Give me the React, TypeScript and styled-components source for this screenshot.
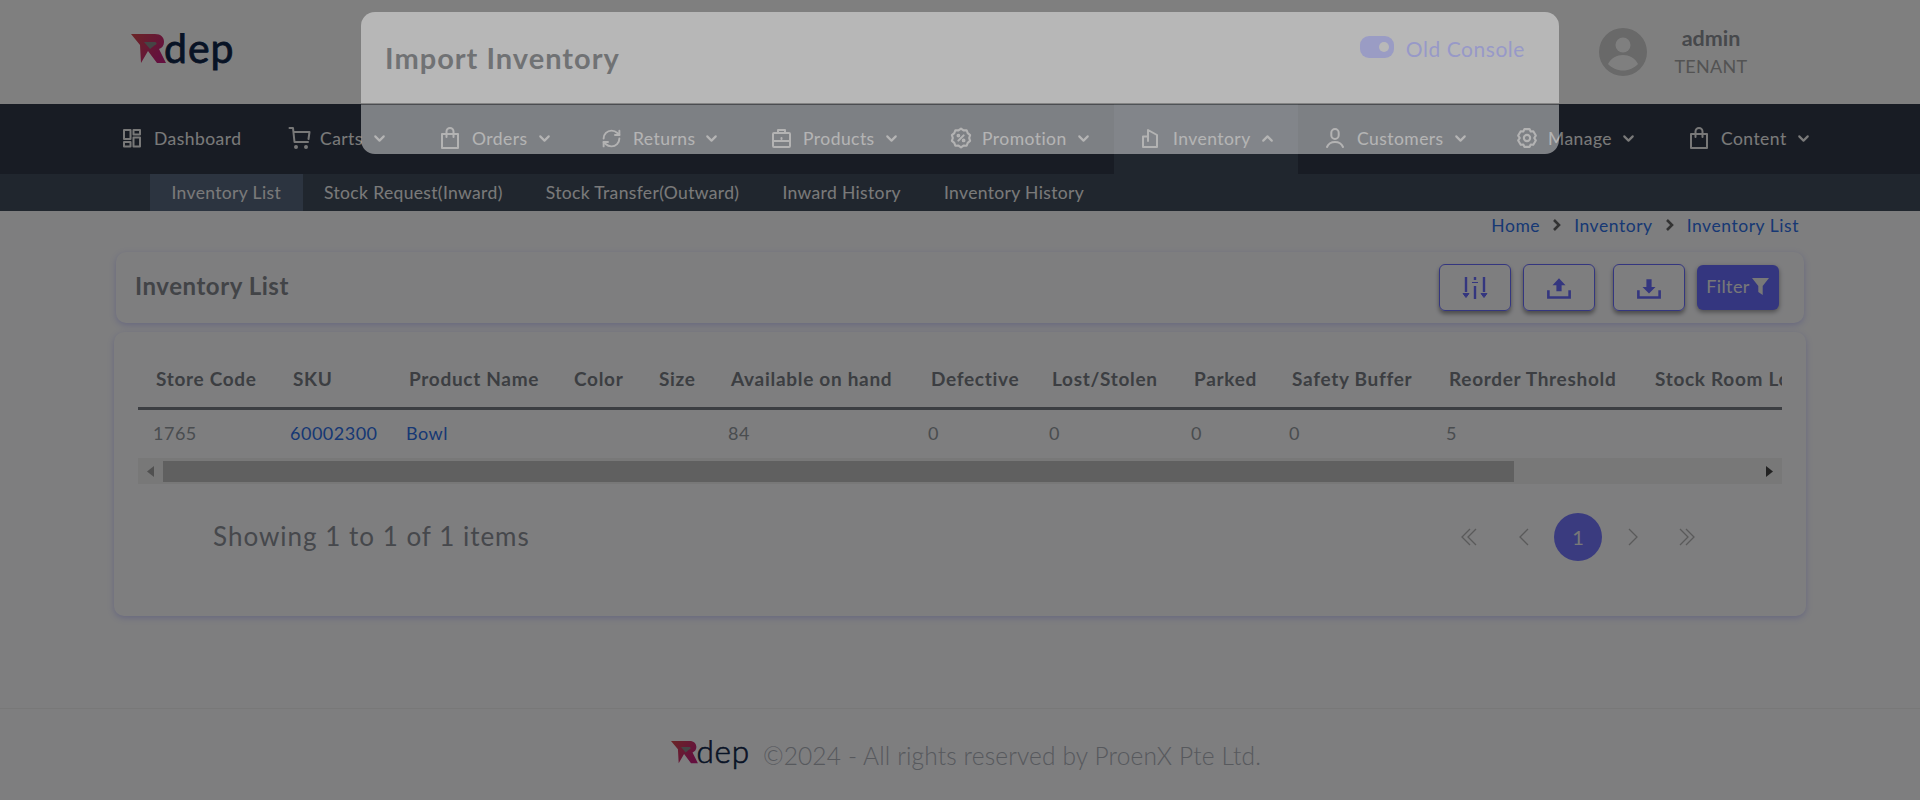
import React from "react";
import styled, { createGlobalStyle } from "styled-components";
import { ChevronDown, ChevronUp, RefreshCw } from "lucide-react";

const FONT = `Lato, "Open Sans", "Liberation Sans", sans-serif`;
const PRIMARY = "#696cff";

const Global = createGlobalStyle`
  html, body { margin: 0; padding: 0; background: #fcfcff; }
  body { font-family: ${FONT}; overflow: hidden; }
  * { box-sizing: border-box; }
`;

const Page = styled.div`
  position: relative;
  width: 1920px;
  height: 800px;
  display: flex;
  flex-direction: column;
  overflow: hidden;
  background: #fcfcff;
`;
const Header = styled.header`
  height: 104px;
  flex: none;
  display: flex;
  align-items: center;
  padding: 0 0 0 131px;
  background: #ffffff;
`;
const LogoWrap = styled.div`
  display: flex;
  margin-top: 1px;
`;
const HeaderRight = styled.div`
  margin-left: auto;
  display: flex;
  align-items: center;
  padding-right: 159px;
`;
const OldConsole = styled.div`
  position: relative;
  z-index: 30;
  display: flex;
  align-items: center;
  gap: 12px;
  margin-right: 74px;
  margin-top: -8px;
  font-size: 21px;
  letter-spacing: 0.55px;
  color: #9799c8;
`;
const ToggleTrack = styled.span`
  position: relative;
  display: block;
  width: 34px;
  height: 22px;
  margin-top: -3px;
  border-radius: 9px;
  background: #9a9cc4;
  &::after {
    content: "";
    position: absolute;
    right: 5px;
    top: 6px;
    width: 10px;
    height: 10px;
    border-radius: 50%;
    background: #b8b8b8;
  }
`;
const Avatar = styled.svg`
  width: 48px;
  height: 48px;
  margin-right: 14px;
  display: block;
`;
const UserBox = styled.div`
  width: 100px;
  display: flex;
  flex-direction: column;
  align-items: center;
  gap: 4px;
`;
const UserName = styled.div`
  font-size: 21.5px;
  font-weight: 700;
  color: #8e9298;
  line-height: 24px;
`;
const UserRole = styled.div`
  font-size: 18px;
  color: #a6a6a6;
  line-height: 24px;
  letter-spacing: 0.3px;
`;
const Nav = styled.nav`
  height: 70px;
  flex: none;
  display: flex;
  padding-left: 95px;
  background: #303848;
`;
const NavItem = styled.div<{ $w: number; $active?: boolean }>`
  width: ${(p) => p.$w}px;
  flex: none;
  display: flex;
  align-items: center;
  padding: 0 0 2px 27px;
  color: #f4f4f4;
  font-size: 17.5px;
  letter-spacing: 0.45px;
  background: ${(p) => (p.$active ? "#404c5c" : "transparent")};
  svg { flex: none; }
`;
const NavIcon = styled.span`
  width: 32px;
  flex: none;
  display: flex;
  align-items: center;
  color: #f0f0f0;
`;
const NavLabel = styled.span`
  margin-right: 8px;
`;
const SubNav = styled.div`
  height: 37px;
  flex: none;
  display: flex;
  padding-left: 150px;
  background: #404c5c;
`;
const SubItem = styled.div<{ $active?: boolean }>`
  padding: 0 21.5px;
  display: flex;
  align-items: center;
  color: #f4f4f4;
  font-size: 17.5px;
  letter-spacing: 0.35px;
  white-space: nowrap;
  background: ${(p) => (p.$active ? "#586880" : "transparent")};
`;
const Crumbs = styled.div`
  height: 28px;
  flex: none;
  display: flex;
  align-items: center;
  justify-content: flex-end;
  gap: 12px;
  padding-right: 121px;
  font-size: 17.5px;
  letter-spacing: 0.55px;
  color: #2e70e8;
  svg { color: #666; }
`;
const Content = styled.main`
  padding: 13px 114px 0 114px;
  display: flex;
  flex-direction: column;
  gap: 9px;
`;
const TitleCard = styled.section`
  margin: 0 2px;
  height: 71px;
  display: flex;
  align-items: center;
  padding: 0 25px 0 19px;
  background: #fcfcff;
  border-radius: 10px;
  box-shadow: 0 2px 6px rgba(105, 108, 255, 0.3);
`;
const PageTitle = styled.h1`
  margin: -4px 0 0;
  font-size: 24px;
  font-weight: 700;
  letter-spacing: 0.55px;
  color: #85888f;
`;
const Actions = styled.div`
  margin-left: auto;
  display: flex;
  align-items: center;
`;
const IconButton = styled.button<{ $gap?: number }>`
  width: 72px;
  height: 47px;
  margin-right: ${(p) => p.$gap ?? 12}px;
  padding: 0;
  display: flex;
  align-items: center;
  justify-content: center;
  background: transparent;
  color: ${PRIMARY};
  border: 1.5px solid ${PRIMARY};
  border-radius: 6px;
  box-shadow: 0 3px 4px rgba(0, 0, 0, 0.4);
`;
const FilterButton = styled.button`
  width: 82px;
  height: 45px;
  padding: 0 0 3px;
  display: flex;
  align-items: center;
  justify-content: center;
  gap: 1px;
  background: ${PRIMARY};
  color: #f0f0f0;
  border: none;
  border-radius: 6px;
  font-family: ${FONT};
  font-size: 18px;
  letter-spacing: 0.4px;
  box-shadow: 0 2px 5px rgba(0, 0, 0, 0.4);
`;
const TableCard = styled.section`
  height: 284px;
  padding: 0 24px;
  background: #fcfcff;
  border-radius: 10px;
  box-shadow: 0 2px 6px rgba(105, 108, 255, 0.3);
`;
const TableClip = styled.div`
  width: 1644px;
  overflow: hidden;
`;
const Table = styled.table`
  width: 1700px;
  table-layout: fixed;
  border-collapse: collapse;
`;
const Th = styled.th`
  height: 76px;
  padding: 18px 0 0 18px;
  text-align: left;
  font-size: 19px;
  font-weight: 700;
  letter-spacing: 0.7px;
  color: #787c84;
  white-space: nowrap;
  border-bottom: 3px solid #787c84;
`;
const Td = styled.td`
  height: 50px;
  padding: 0 0 2px 15px;
  font-size: 18px;
  letter-spacing: 0.5px;
  color: #949aa0;
  white-space: nowrap;
`;
const TdLink = styled(Td)`
  color: #2e70e8;
`;
const ScrollBar = styled.div`
  height: 26px;
  width: 1644px;
  display: flex;
  align-items: center;
  background: #f1f1f1;
`;
const ScrollBtn = styled.span<{ $tone: string }>`
  width: 25px;
  flex: none;
  display: flex;
  justify-content: center;
  svg { display: block; fill: ${(p) => p.$tone}; }
`;
const ScrollThumb = styled.div`
  width: 1351px;
  height: 21px;
  background: #c1c1c1;
`;
const Grow = styled.div`
  flex: 1;
`;
const Pager = styled.div`
  display: flex;
  align-items: center;
  height: 48px;
  margin-top: 29px;
  padding-left: 75px;
`;
const ShowText = styled.div`
  margin-top: -2px;
  font-size: 26px;
  letter-spacing: 1px;
  color: #8c9098;
`;
const PagerRight = styled.div`
  margin-left: auto;
  margin-right: 71px;
  display: flex;
  gap: 6.5px;
`;
const PageBtn = styled.span<{ $active?: boolean }>`
  width: 48px;
  height: 48px;
  border-radius: 50%;
  display: flex;
  align-items: center;
  justify-content: center;
  font-size: 20px;
  color: ${(p) => (p.$active ? "#f0f0f0" : "#b4b4b4")};
  background: ${(p) => (p.$active ? "#7477ff" : "transparent")};
`;
const Footer = styled.footer`
  margin-top: auto;
  height: 92px;
  flex: none;
  display: flex;
  align-items: center;
  justify-content: center;
  gap: 12px;
  padding: 2px 0 0 12px;
  border-top: 1px solid #f0f0f0;
  font-size: 24.5px;
  letter-spacing: 0.15px;
  font-weight: 300;
  color: #aeb2ba;
`;
const Overlay = styled.div`
  position: absolute;
  inset: 0;
  z-index: 10;
  background: rgba(0, 0, 0, 0.5);
`;
const Modal = styled.div`
  position: absolute;
  z-index: 20;
  left: 361px;
  top: 12px;
  width: 1198px;
  height: 142px;
  background: #ffffff;
  border-radius: 14px;
  opacity: 0.44;
`;
const ModalHeader = styled.div`
  height: 93px;
  display: flex;
  align-items: center;
  padding: 0 24px;
  border-bottom: 2px solid #8c8c8c;
`;
const ModalTitle = styled.h2`
  margin: 0;
  font-size: 29px;
  font-weight: 700;
  letter-spacing: 1px;
  color: #5f6368;
`;

const Logo = ({ w, h }: { w: number; h: number }) => (
  <svg width={w} height={h} viewBox="0 0 104 40">
    <defs>
      <linearGradient id="lg" x1="0" y1="0" x2="1" y2="0.6">
        <stop offset="0" stopColor="#d64a4a" />
        <stop offset="1" stopColor="#c8207e" />
      </linearGradient>
    </defs>
    <path d="M0 1h24c6 0 9 3.500 9 8 0 3.500-2 6-5 7l7 14h-9l-9-12-7 12-1-18z" fill="url(#lg)" />
    <path d="M13 9h11c2 0 2 3 0 3l-5 4z" fill="#8a8a8a" />
    <text x="33" y="30" fontFamily="Lato, sans-serif" fontSize="41" letterSpacing="1" stroke="#10264a" strokeWidth="0.8" fill="#10264a">dep</text>
  </svg>
);

const s = { fill: "none", stroke: "currentColor", strokeWidth: 2, strokeLinecap: "round" as const, strokeLinejoin: "round" as const };
const DashIcon = () => (
  <svg width="20" height="20" viewBox="0 0 20 20" {...s}>
    <rect x="2" y="2" width="6.5" height="9" />
    <rect x="11.5" y="2" width="6.5" height="4.5" />
    <rect x="2" y="14" width="6.5" height="4.5" />
    <rect x="11.5" y="9.5" width="6.5" height="9" />
  </svg>
);
const CartIcon = () => (
  <svg width="23" height="24" viewBox="0 0 23 24" {...s}>
    <path d="M1.500 2H5l1.500 14H20" />
    <path d="M6 6h15.500l-1 7" />
    <circle cx="8" cy="21" r="1" fill="currentColor" />
    <circle cx="18" cy="21" r="1" fill="currentColor" />
  </svg>
);
const BagIcon = () => (
  <svg width="20" height="24" viewBox="0 0 20 24" {...s}>
    <rect x="2" y="8" width="16" height="14" />
    <path d="M6.500 8V5.500a3.500 3.500 0 0 1 7 0V8M6.500 8v3M13.500 8v3" />
  </svg>
);
const BoxIcon = () => (
  <svg width="21" height="21" viewBox="0 0 21 21" {...s}>
    <rect x="2" y="5" width="17" height="14" rx="1" />
    <path d="M7 5V2h7v3M2 13h17M10.500 10v1" />
  </svg>
);
const PromoIcon = () => (
  <svg width="22" height="22" viewBox="0 0 21 21" {...s}>
    <path d="M10.500 1.500l2.400 1.700 3-.1 1 2.800 2.300 1.900-.9 2.700.9 2.700-2.300 1.900-1 2.800-3-.1-2.400 1.700-2.400-1.700-3 .1-1-2.800-2.300-1.900.9-2.700-.9-2.700 2.300-1.900 1-2.800 3 .1z" />
    <path d="M13 8l-5 5" />
    <circle cx="8" cy="8.200" r=".8" />
    <circle cx="13" cy="12.800" r=".8" />
  </svg>
);
const InvIcon = () => (
  <svg width="18" height="21" viewBox="0 0 18 21" {...s}>
    <path d="M2 19V8.500h5V2l9 5v12z" />
    <path d="M7 8.500V13" />
  </svg>
);
const UserIcon = () => (
  <svg width="20" height="22" viewBox="0 0 20 22" {...s}>
    <rect x="6.300" y="2" width="7.400" height="10" rx="3.700" />
    <path d="M2 20c1.500-3.600 4.500-5 8-5s6.500 1.400 8 5" />
  </svg>
);
const GearIcon = () => (
  <svg width="22" height="22" viewBox="0 0 21 21" {...s}>
    <path d="M8 2h5l1 2.300 2.500-.3 2.400 4.200-1.500 2.300 1.500 2.300-2.400 4.200-2.500-.3-1 2.300H8l-1-2.300-2.500.3-2.400-4.200 1.500-2.300-1.500-2.300L4.500 4 7 4.300z" />
    <circle cx="10.500" cy="10.500" r="3" />
  </svg>
);
const Chevron = ({ up }: { up?: boolean }) =>
  up ? <ChevronUp size={17} strokeWidth={3} /> : <ChevronDown size={17} strokeWidth={3} />;

const navItems: { label: string; w: number; icon: React.ReactNode; chev?: boolean; active?: boolean }[] = [
  { label: "Dashboard", w: 166, icon: <DashIcon /> },
  { label: "Carts", w: 152, icon: <CartIcon />, chev: true },
  { label: "Orders", w: 161, icon: <BagIcon />, chev: true },
  { label: "Returns", w: 170, icon: <RefreshCw size={21} strokeWidth={2.2} />, chev: true },
  { label: "Products", w: 179, icon: <BoxIcon />, chev: true },
  { label: "Promotion", w: 191, icon: <PromoIcon />, chev: true },
  { label: "Inventory", w: 184, icon: <InvIcon />, chev: true, active: true },
  { label: "Customers", w: 191, icon: <UserIcon />, chev: true },
  { label: "Manage", w: 173, icon: <GearIcon />, chev: true },
  { label: "Content", w: 172, icon: <BagIcon />, chev: true },
];

const columns: [string, number][] = [
  ["Store Code", 137], ["SKU", 116], ["Product Name", 165], ["Color", 85], ["Size", 72],
  ["Available on hand", 200], ["Defective", 121], ["Lost/Stolen", 142], ["Parked", 98],
  ["Safety Buffer", 157], ["Reorder Threshold", 206], ["Stock Room Location", 201],
];

const DL = ({ down }: { down?: boolean }) => (
  <svg width="26" height="26" viewBox="0 0 24 24" fill="currentColor">
    {down ? <path d="M12 17l-6-6h3.600V4h4.800v7H18z" /> : <path d="M12 3l6 6.500h-3.600V15H9.600V9.500H6z" />}
    <path d="M1 14h2.400v5.600h17.200V14H23v8H1z" />
  </svg>
);

const App = () => (
  <Page>
    <Global />
    <Header>
      <LogoWrap><Logo w={104} h={40} /></LogoWrap>
      <HeaderRight>
        <OldConsole><ToggleTrack />Old Console</OldConsole>
        <Avatar viewBox="0 0 48 48">
          <circle cx="24" cy="24" r="24" fill="#d2d2d2" />
          <circle cx="24" cy="17" r="7.500" fill="#ffffff" />
          <path d="M9 36c3-6 9-9 15-9s12 3 15 9c-4 4-9 6.500-15 6.500S13 40 9 36z" fill="#ffffff" />
        </Avatar>
        <UserBox>
          <UserName>admin</UserName>
          <UserRole>TENANT</UserRole>
        </UserBox>
      </HeaderRight>
    </Header>
    <Nav>
      {navItems.map((n) => (
        <NavItem key={n.label} $w={n.w} $active={n.active}>
          <NavIcon>{n.icon}</NavIcon>
          <NavLabel>{n.label}</NavLabel>
          {n.chev && <Chevron up={n.active} />}
        </NavItem>
      ))}
    </Nav>
    <SubNav>
      <SubItem $active>Inventory List</SubItem>
      <SubItem>Stock Request(Inward)</SubItem>
      <SubItem>Stock Transfer(Outward)</SubItem>
      <SubItem>Inward History</SubItem>
      <SubItem>Inventory History</SubItem>
    </SubNav>
    <Crumbs>
      <span>Home</span>
      <svg width="10" height="14" viewBox="0 0 10 14" fill="none" stroke="currentColor" strokeWidth="2.600"><path d="M2 2l5 5-5 5" /></svg>
      <span>Inventory</span>
      <svg width="10" height="14" viewBox="0 0 10 14" fill="none" stroke="currentColor" strokeWidth="2.600"><path d="M2 2l5 5-5 5" /></svg>
      <span>Inventory List</span>
    </Crumbs>
    <Content>
      <TitleCard>
        <PageTitle>Inventory List</PageTitle>
        <Actions>
          <IconButton>
            <svg width="26" height="24" viewBox="0 0 26 24" fill="none" stroke="currentColor" strokeWidth="2.400">
              <path d="M4 1v15M13 1v3M13 10v13M22 1v15" />
              <path d="M1 17.500h6l-3 4zM10 6.500h6M19 17.500h6l-3 4z" fill="currentColor" strokeWidth="1" />
            </svg>
          </IconButton>
          <IconButton $gap={18}><DL /></IconButton>
          <IconButton><DL down /></IconButton>
          <FilterButton>
            Filter
            <svg width="19" height="19" viewBox="0 0 19 19" fill="currentColor"><path d="M1 1h17l-6.300 8v9l-4.400-3V9z" /></svg>
          </FilterButton>
        </Actions>
      </TitleCard>
      <TableCard>
        <TableClip>
          <Table>
            <colgroup>{columns.map(([c, w]) => <col key={c} width={w} />)}</colgroup>
            <thead>
              <tr>{columns.map(([c]) => <Th key={c}>{c}</Th>)}</tr>
            </thead>
            <tbody>
              <tr>
                <Td>1765</Td>
                <TdLink>60002300</TdLink>
                <TdLink>Bowl</TdLink>
                <Td /><Td />
                <Td>84</Td><Td>0</Td><Td>0</Td><Td>0</Td><Td>0</Td><Td>5</Td><Td />
              </tr>
            </tbody>
          </Table>
        </TableClip>
        <ScrollBar>
          <ScrollBtn $tone="#a0a0a0"><svg width="7" height="11" viewBox="0 0 7 11"><path d="M7 0v11L0 5.500z" /></svg></ScrollBtn>
          <ScrollThumb />
          <Grow />
          <ScrollBtn $tone="#444444"><svg width="7" height="11" viewBox="0 0 7 11"><path d="M0 0v11l7-5.500z" /></svg></ScrollBtn>
        </ScrollBar>
        <Pager>
          <ShowText>Showing 1 to 1 of 1 items</ShowText>
          <PagerRight>
            <PageBtn>
              <svg width="16" height="18" viewBox="0 0 16 18" fill="none" stroke="currentColor" strokeWidth="1.300"><path d="M9 1L1 9l8 8M15 1L7 9l8 8" /></svg>
            </PageBtn>
            <PageBtn>
              <svg width="10" height="18" viewBox="0 0 10 18" fill="none" stroke="currentColor" strokeWidth="1.300"><path d="M9 1L1 9l8 8" /></svg>
            </PageBtn>
            <PageBtn $active>1</PageBtn>
            <PageBtn>
              <svg width="10" height="18" viewBox="0 0 10 18" fill="none" stroke="currentColor" strokeWidth="1.300"><path d="M1 1l8 8-8 8" /></svg>
            </PageBtn>
            <PageBtn>
              <svg width="16" height="18" viewBox="0 0 16 18" fill="none" stroke="currentColor" strokeWidth="1.300"><path d="M1 1l8 8-8 8M7 1l8 8-8 8" /></svg>
            </PageBtn>
          </PagerRight>
        </Pager>
      </TableCard>
    </Content>
    <Footer>
      <Logo w={80} h={31} />
      ©2024 - All rights reserved by ProenX Pte Ltd.
    </Footer>
    <Overlay />
    <Modal>
      <ModalHeader>
        <ModalTitle>Import Inventory</ModalTitle>
      </ModalHeader>
    </Modal>
  </Page>
);

export default App;
